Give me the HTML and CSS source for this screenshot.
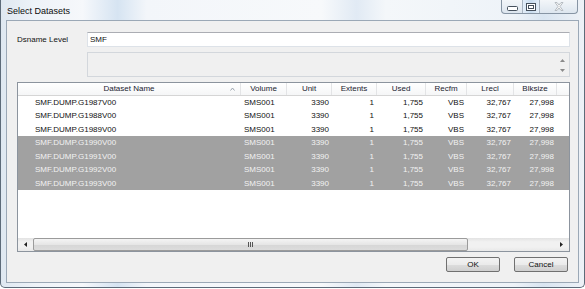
FILE: index.html
```html
<!DOCTYPE html>
<html lang="en">

<head>
    <meta charset="UTF-8">
    <title>Select Datasets</title>
    <link rel="stylesheet" href="styles.css">
</head>

<body>
    <div class="window">
        <div class="titlebar">
            <span class="title">Select Datasets</span>
            <div class="caption">
                <span class="cap-btn min">
                    <svg width="11" height="5" viewBox="0 0 11 5"><rect x="0.5" y="0.5" width="10" height="4" rx="1" fill="#fff" stroke="#45505c"/></svg>
                </span>
                <span class="cap-btn max">
                    <svg width="10" height="8" viewBox="0 0 10 8"><rect x="0.5" y="0.5" width="9" height="7" fill="#fff" stroke="#45505c"/><rect x="2.5" y="2.5" width="5" height="3" fill="none" stroke="#45505c"/></svg>
                </span>
                <span class="cap-btn close">
                    <svg width="10" height="9" viewBox="0 0 10 9"><path d="M1 0.5 L3 0.5 L5 3 L7 0.5 L9 0.5 L6 4.5 L9 8.5 L7 8.5 L5 6 L3 8.5 L1 8.5 L4 4.5 Z" fill="#f4f4f4" stroke="#a9b0b8" stroke-width="0.8"/></svg>
                </span>
            </div>
        </div>

        <div class="client">
            <div class="field-row">
                <span class="field-label">Dsname Level</span>
                <input class="field-input" type="text" value="SMF">
            </div>
            <div class="field-row">
                <span class="field-label"></span>
                <div class="memo">
                    <div class="memo-scroll">
                        <svg width="5" height="3" viewBox="0 0 5 3"><path d="M0 3 L2.5 0 L5 3 Z" fill="#8a8a8a"/></svg>
                        <svg width="5" height="3" viewBox="0 0 5 3"><path d="M0 0 L2.5 3 L5 0 Z" fill="#8a8a8a"/></svg>
                    </div>
                </div>
            </div>

            <div class="listview">
                <div class="lv-row lv-header">
                    <span class="hcell sorted">Dataset Name
                        <svg class="sort" width="5" height="4" viewBox="0 0 5 4"><path d="M0.5 3.5 L2.5 1 L4.5 3.5" fill="none" stroke="#9aa3ad"/></svg>
                    </span>
                    <span class="hcell">Volume</span>
                    <span class="hcell">Unit</span>
                    <span class="hcell">Extents</span>
                    <span class="hcell">Used</span>
                    <span class="hcell">Recfm</span>
                    <span class="hcell">Lrecl</span>
                    <span class="hcell">Blksize</span>
                    <span class="hcell"></span>
                </div>
                <div class="lv-body" id="rows"></div>
                <div class="hscroll">
                    <span class="sb-btn">
                        <svg width="3" height="5" viewBox="0 0 3 5"><path d="M3 0 L0 2.5 L3 5 Z" fill="#222"/></svg>
                    </span>
                    <span class="sb-thumb">
                        <svg width="6" height="5" viewBox="0 0 6 5"><path d="M0.5 0 V5 M2.5 0 V5 M4.5 0 V5" stroke="#555" stroke-width="1"/></svg>
                    </span>
                    <span class="sb-track"></span>
                    <span class="sb-btn">
                        <svg width="3" height="5" viewBox="0 0 3 5"><path d="M0 0 L3 2.5 L0 5 Z" fill="#222"/></svg>
                    </span>
                </div>
            </div>

            <div class="buttons">
                <button class="btn">OK</button>
                <button class="btn">Cancel</button>
            </div>
        </div>
    </div>

    <script>
        const rows = document.getElementById('rows')

        for (let year = 1987; year <= 1993; year++) {
            const row = document.createElement('div')
            row.className = year >= 1990 ? 'lv-row item selected' : 'lv-row item'
            const cells = [`SMF.DUMP.G${year}V00`, 'SMS001', '3390', '1', '1,755', 'VBS', '32,767', '27,998', '']
            cells.forEach(function (text, i) {
                const cell = document.createElement('span')
                cell.className = i < 2 ? 'cell' : 'cell num'
                if (i === 0) cell.classList.add('first')
                cell.textContent = text
                row.appendChild(cell)
            })
            rows.appendChild(row)
        }
    </script>
</body>

</html>
```

FILE: styles.css
```css
* {
    box-sizing: border-box;
    margin: 0;
    padding: 0;
}

body {
    background: #ffffff;
    font-family: "Liberation Sans", Arial, sans-serif;
    font-size: 8px;
    color: #111;
}

.window {
    width: 585px;
    height: 288px;
    padding: 0 5px 4px 5px;
    border: 1px solid #5d6b79;
    border-top: none;
    border-radius: 0 0 5px 5px;
    background: linear-gradient(90deg, #dfe8f1 0%, #eef3f8 6%, #f6f8fb 14%, #d6e4f2 20%, #f3f6fa 25%, #f7f9fb 55%, #e1eaf4 61%, #f4f7fa 66%, #eef3f8 88%, #d9e5f1 93%, #eef2f7 100%);
    display: flex;
    flex-direction: column;
}

.titlebar {
    height: 20px;
    display: flex;
    justify-content: space-between;
    align-items: flex-start;
}

.title {
    font-size: 9px;
    color: #0c0c0c;
    padding: 6px 0 0 1px;
}

.caption {
    display: flex;
    height: 14px;
    margin-right: 1px;
    border: 1px solid #8795a4;
    border-top: none;
    border-radius: 0 0 4px 4px;
    overflow: hidden;
    background: linear-gradient(#f3f6f9, #dde6ef);
}

.cap-btn {
    display: flex;
    align-items: center;
    justify-content: center;
    border-right: 1px solid #a8b4c1;
}

.cap-btn.min {
    width: 21px;
    padding-top: 4px;
}

.cap-btn.max {
    width: 17px;
    background: linear-gradient(90deg, #e4eef8, #c8dcef, #e4eef8);
}

.cap-btn.close {
    width: 37px;
    border-right: none;
}

.client {
    flex: 1;
    background: #f0f0f0;
    border: 1px solid #9ba8b6;
    padding: 11px 8px 0 10px;
    display: flex;
    flex-direction: column;
}

.field-row {
    display: flex;
}

.field-row + .field-row {
    margin-top: 5px;
}

.field-label {
    width: 70px;
    line-height: 15px;
    color: #111;
}

.field-input {
    flex: 1;
    height: 15px;
    border: 1px solid #dde2e8;
    border-top-color: #abadb3;
    background: #ffffff;
    font-family: "Liberation Sans", Arial, sans-serif;
    font-size: 8px;
    padding: 0 2px;
    color: #111;
    outline: none;
}

.memo {
    flex: 1;
    height: 25px;
    border: 1px solid #d3d7dc;
    background: #f0f0f0;
    display: flex;
    justify-content: flex-end;
}

.memo-scroll {
    width: 14px;
    display: flex;
    flex-direction: column;
    align-items: center;
    justify-content: space-between;
    padding: 6px 0 4px 0;
}

.listview {
    margin-top: 5px;
    height: 170px;
    border: 1px solid #8c949e;
    background: #ffffff;
    display: flex;
    flex-direction: column;
}

.lv-row {
    display: grid;
    grid-template-columns: 223px 46px 45px 45px 49px 41px 47px 43px 1fr;
}

.lv-header {
    height: 13px;
    border-bottom: 1px solid #d5d5d5;
    background: linear-gradient(#ffffff, #f5f6f7);
}

.hcell {
    position: relative;
    text-align: center;
    line-height: 12px;
    border-right: 1px solid #e3e4e6;
    color: #1a2330;
}

.hcell:last-child {
    border-right: none;
}

.sort {
    position: absolute;
    right: 5px;
    top: 4px;
}

.lv-body {
    flex: 1;
}

.item {
    height: 13.45px;
    line-height: 13.45px;
}

.cell {
    padding-left: 3px;
    white-space: nowrap;
    overflow: hidden;
}

.cell.first {
    padding-left: 17px;
}

.cell.num {
    text-align: right;
    padding: 0 3px 0 0;
}

.selected {
    background: #a1a1a1;
    color: #f2f2f2;
}

.hscroll {
    height: 13px;
    display: flex;
    background: linear-gradient(#e3e3e3, #f1f1f1 30%, #f1f1f1 70%, #e8e8e8);
}

.sb-btn {
    width: 15px;
    display: flex;
    align-items: center;
    justify-content: center;
}

.sb-thumb {
    width: 435px;
    border: 1px solid #9b9b9b;
    border-radius: 2px;
    background: linear-gradient(#f4f4f4, #e6e6e6 50%, #d6d6d6 51%, #dcdcdc);
    display: flex;
    align-items: center;
    justify-content: center;
}

.sb-track {
    flex: 1;
}

.buttons {
    margin-top: 5px;
    padding-right: 2px;
    display: flex;
    justify-content: flex-end;
    gap: 14px;
}

.btn {
    width: 54px;
    height: 15px;
    border: 1px solid #707070;
    border-radius: 2px;
    background: linear-gradient(#f3f3f3, #ebebeb 50%, #dddddd 51%, #cfcfcf);
    font-family: "Liberation Sans", Arial, sans-serif;
    font-size: 8px;
    color: #111;
}
```
